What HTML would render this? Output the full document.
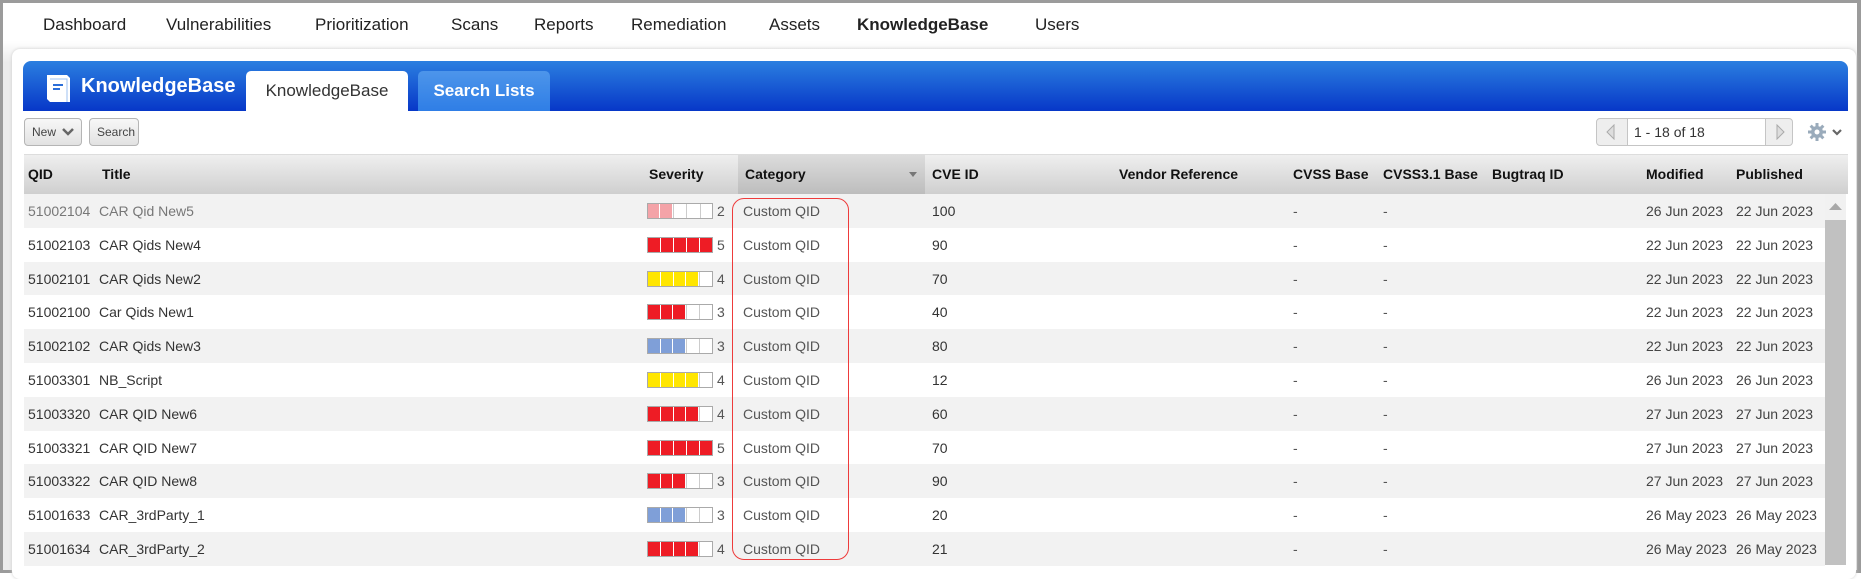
<!DOCTYPE html>
<html><head><meta charset="utf-8"><style>
*{margin:0;padding:0;box-sizing:border-box}
body{width:1861px;height:573px;overflow:hidden;background:#fff;font-family:"Liberation Sans",Arial,sans-serif;position:relative}
.frame{position:absolute;left:0;top:0;width:1861px;height:573px;border:3px solid #9b9b9b;border-right-width:4px;background:linear-gradient(#fff 0,#fff 38px,#ececec 60px,#ececec)}
.nav{position:absolute;top:15px;font-size:17px;color:#222}
.card{position:absolute;left:12px;top:49px;width:1844px;height:530px;background:#fff;border-radius:8px;box-shadow:0 0 3px #ccc}
.blue{position:absolute;left:23px;top:61px;width:1825px;height:50px;border-radius:8px 8px 0 0;background:linear-gradient(#2b7fe0,#0737c8)}
.ab{position:absolute}
.tab1{left:246px;top:71px;width:162px;height:40px;background:#fff;border-radius:5px 5px 0 0;color:#333;font-size:17px;text-align:center;line-height:40px}
.tab2{left:418px;top:71px;width:132px;height:40px;background:linear-gradient(#4d95ea,#2f7ee6);border-radius:5px 5px 0 0;color:#fff;font-size:17px;font-weight:bold;text-align:center;line-height:40px}
.btn{top:118px;height:28px;border:1px solid #b5b5b5;border-radius:4px;background:linear-gradient(#f7f7f7,#e2e2e2);font-size:12px;color:#444;line-height:26px;padding-left:7px}
.hdr{left:24px;top:154px;width:1824px;height:40px;background:linear-gradient(#efefef,#cfcfcf);border-top:1px solid #ddd}
.h{position:absolute;top:154px;line-height:40px;font-size:14px;font-weight:bold;color:#111}
.row{position:absolute;left:24px;width:1801px;height:34px}
.c{position:absolute;font-size:14px;color:#333;line-height:34px}
.sev{position:absolute;left:647px;height:16px;width:66px;border:1px solid #aaa;display:flex}
.sev i{flex:1;border-right:1px solid #fff}
.sev i:last-child{border-right:none}
</style></head><body>
<div class="frame"></div>
<div class="nav" style="left:43px">Dashboard</div>
<div class="nav" style="left:166px">Vulnerabilities</div>
<div class="nav" style="left:315px">Prioritization</div>
<div class="nav" style="left:451px">Scans</div>
<div class="nav" style="left:534px">Reports</div>
<div class="nav" style="left:631px">Remediation</div>
<div class="nav" style="left:769px">Assets</div>
<div class="nav" style="left:857px;font-weight:bold">KnowledgeBase</div>
<div class="nav" style="left:1035px">Users</div>
<div class="card"></div>
<div class="blue"></div>
<svg class="ab" style="left:45px;top:73px" width="27" height="30" viewBox="0 0 27 30"><path d="M2 2h20l3 3v24H5l-3-3z" fill="#fff"/><path d="M5 6h17v23" fill="none" stroke="#9cc0f0" stroke-width="1"/><rect x="8" y="11" width="10" height="2" fill="#2b6ed8"/><rect x="8" y="15" width="7" height="2" fill="#2b6ed8"/></svg>
<div class="ab" style="left:81px;top:75px;color:#fff;font-weight:bold;font-size:20px">KnowledgeBase</div>
<div class="ab tab1">KnowledgeBase</div>
<div class="ab tab2">Search Lists</div>
<div class="ab btn" style="left:24px;width:58px">New <svg width="12" height="8" style="margin-left:3px"><path d="M1 1l5 5 5-5" fill="none" stroke="#666" stroke-width="2.5"/></svg></div>
<div class="ab btn" style="left:89px;width:50px">Search</div>
<div class="ab" style="left:1596px;top:118px;width:197px;height:28px;border:1px solid #c5c5c5;border-radius:4px;background:#eee"></div>
<div class="ab" style="left:1627px;top:118px;width:139px;height:28px;border:1px solid #c5c5c5;background:#fff;font-size:14px;color:#333;line-height:26px;padding-left:6px">1 - 18 of 18</div>
<svg class="ab" style="left:1605px;top:124px" width="12" height="16"><path d="M9 1L2 8l7 7z" fill="#ddd" stroke="#aaa"/></svg>
<svg class="ab" style="left:1774px;top:124px" width="12" height="16"><path d="M3 1l7 7-7 7z" fill="#ddd" stroke="#aaa"/></svg>
<svg class="ab" style="left:1807px;top:123px" width="38" height="20"><g fill="#9aabbb"><circle cx="10" cy="9" r="6"/><rect x="8.5" y="0" width="3" height="18"/><rect x="1" y="7.5" width="18" height="3"/><rect x="8.5" y="0" width="3" height="18" transform="rotate(45 10 9)"/><rect x="8.5" y="0" width="3" height="18" transform="rotate(-45 10 9)"/></g><circle cx="10" cy="9" r="2.5" fill="#fff"/><path d="M26 7l4 4 4-4" fill="none" stroke="#666" stroke-width="2.2"/></svg>
<div class="ab hdr"></div>
<div class="ab" style="left:738px;top:155px;width:187px;height:39px;background:linear-gradient(#dcdcdc,#bdbdbd)"></div>
<svg class="ab" style="left:909px;top:172px" width="8" height="5"><path d="M0 0h8L4 5z" fill="#777"/></svg>
<div class="h" style="left:28px">QID</div>
<div class="h" style="left:102px">Title</div>
<div class="h" style="left:649px">Severity</div>
<div class="h" style="left:745px">Category</div>
<div class="h" style="left:932px">CVE ID</div>
<div class="h" style="left:1119px">Vendor Reference</div>
<div class="h" style="left:1293px">CVSS Base</div>
<div class="h" style="left:1383px">CVSS3.1 Base</div>
<div class="h" style="left:1492px">Bugtraq ID</div>
<div class="h" style="left:1646px">Modified</div>
<div class="h" style="left:1736px">Published</div>
<div id="rows"></div>
<div class="ab" style="left:1825px;top:194px;width:21px;height:371px;background:#f1f1f1"></div>
<div class="ab" style="left:1825px;top:220px;width:21px;height:345px;background:#c1c1c1"></div>
<svg class="ab" style="left:1829px;top:203px" width="13" height="8"><path d="M0 7L6.5 0 13 7z" fill="#a8a8a8"/></svg>
<div class="ab" style="left:732px;top:198px;width:117px;height:362px;border:1.5px solid #ee3b3b;border-radius:12px"></div>
<script>
var d=[["51002104","CAR Qid New5",2,"#f4a3a8","100","26 Jun 2023","22 Jun 2023"],
["51002103","CAR Qids New4",5,"#ee1c25","90","22 Jun 2023","22 Jun 2023"],
["51002101","CAR Qids New2",4,"#ffe600","70","22 Jun 2023","22 Jun 2023"],
["51002100","Car Qids New1",3,"#ee1c25","40","22 Jun 2023","22 Jun 2023"],
["51002102","CAR Qids New3",3,"#7f9fd8","80","22 Jun 2023","22 Jun 2023"],
["51003301","NB_Script",4,"#ffe600","12","26 Jun 2023","26 Jun 2023"],
["51003320","CAR QID New6",4,"#ee1c25","60","27 Jun 2023","27 Jun 2023"],
["51003321","CAR QID New7",5,"#ee1c25","70","27 Jun 2023","27 Jun 2023"],
["51003322","CAR QID New8",3,"#ee1c25","90","27 Jun 2023","27 Jun 2023"],
["51001633","CAR_3rdParty_1",3,"#7f9fd8","20","26 May 2023","26 May 2023"],
["51001634","CAR_3rdParty_2",4,"#ee1c25","21","26 May 2023","26 May 2023"]];
var h="";
d.forEach(function(r,i){var y=194+i*33.8;var g=i==0?"#777":"#333";
h+='<div class="row" style="top:'+y+'px;background:'+(i%2==0?'#f2f2f2':'#fff')+'"></div>';
var t=function(x,s,c){h+='<div class="c" style="left:'+x+'px;top:'+y+'px;color:'+(c||'#333')+'">'+s+'</div>';};
t(28,r[0],g);t(99,r[1],g);t(717,r[2],'#555');t(743,"Custom QID",'#555');t(932,r[4]);t(1293,"-",'#555');t(1383,"-",'#555');t(1646,r[5],'#444');t(1736,r[6],'#444');
var b="";for(var k=0;k<5;k++)b+='<i style="background:'+(k<r[2]?r[3]:'#fff')+';'+(k>=r[2]?'border-left:1px solid #ccc;':'')+'"></i>';
h+='<div class="sev" style="top:'+(y+9)+'px">'+b+'</div>';});
document.getElementById("rows").innerHTML=h;
</script>
</body></html>
